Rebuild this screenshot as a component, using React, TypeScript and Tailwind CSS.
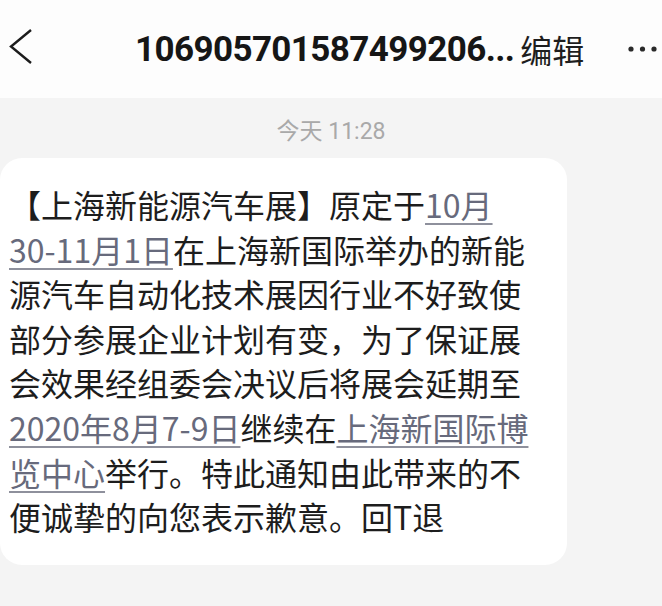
import React from "react";

const CJK = '"Noto Sans CJK SC", "Noto Sans", sans-serif';

function Link({ children }: { children: React.ReactNode }) {
  return (
    <span className="text-[#676a7c] underline decoration-[#8e909c] decoration-[1.5px] underline-offset-[5px]">
      {children}
    </span>
  );
}

export default function App() {
  const lines: React.ReactNode[] = [
    <>
      【上海新能源汽车展】原定于<Link>10月</Link>
    </>,
    <>
      <Link>30-11月1日</Link>在上海新国际举办的新能
    </>,
    <>源汽车自动化技术展因行业不好致使</>,
    <>部分参展企业计划有变，为了保证展</>,
    <>会效果经组委会决议后将展会延期至</>,
    <>
      <Link>2020年8月7-9日</Link>继续在<Link>上海新国际博</Link>
    </>,
    <>
      <Link>览中心</Link>举行。特此通知由此带来的不
    </>,
    <>便诚挚的向您表示歉意。回T退</>,
  ];

  return (
    <div className="w-[662px] h-[606px] overflow-hidden bg-[#f4f4f4] flex flex-col" style={{ fontFamily: CJK }}>
      {/* Header */}
      <div className="h-[98px] bg-[#fdfdfd] flex items-center pl-[9px] pr-[4px] shrink-0">
        <svg width="26" height="40" viewBox="0 0 26 40" className="shrink-0 mt-[-2px]">
          <path d="M22 2 L2 18.5 L22 35" fill="none" stroke="#1c1c1c" strokeWidth="2.4" strokeLinejoin="miter" />
        </svg>
        <div className="ml-[100px] flex items-center whitespace-nowrap">
          <span
            className="text-[35px] font-bold text-[#161616] leading-none tracking-[-0.6px]"
            style={{ fontFamily: 'Roboto, "Noto Sans CJK SC", sans-serif' }}
          >
            106905701587499206...
          </span>
          <span className="ml-[6px] text-[32px] text-[#1e1e1e] leading-none">编辑</span>
        </div>
        <svg width="30" height="10" viewBox="0 0 30 10" className="ml-auto shrink-0">
          <circle cx="3" cy="5" r="2.6" fill="#2a2a2a" />
          <circle cx="14.5" cy="5" r="2.6" fill="#2a2a2a" />
          <circle cx="26" cy="5" r="2.6" fill="#2a2a2a" />
        </svg>
      </div>

      {/* Timestamp */}
      <div className="h-[60px] flex items-center justify-center shrink-0 pt-[6px]">
        <span className="text-[23px] text-[#a9a9a9] leading-none" style={{ fontFamily: 'Roboto, "Noto Sans CJK SC", sans-serif' }}>
          今天 11:28
        </span>
      </div>

      {/* Bubble */}
      <div className="w-[567px] bg-white rounded-[22px] pt-[24px] pb-[26px] pl-[9px]">
        {lines.map((l, i) => (
          <div key={i} className="text-[32px] leading-[44.6px] text-[#1d1d1d] whitespace-nowrap">
            {l}
          </div>
        ))}
      </div>
    </div>
  );
}
